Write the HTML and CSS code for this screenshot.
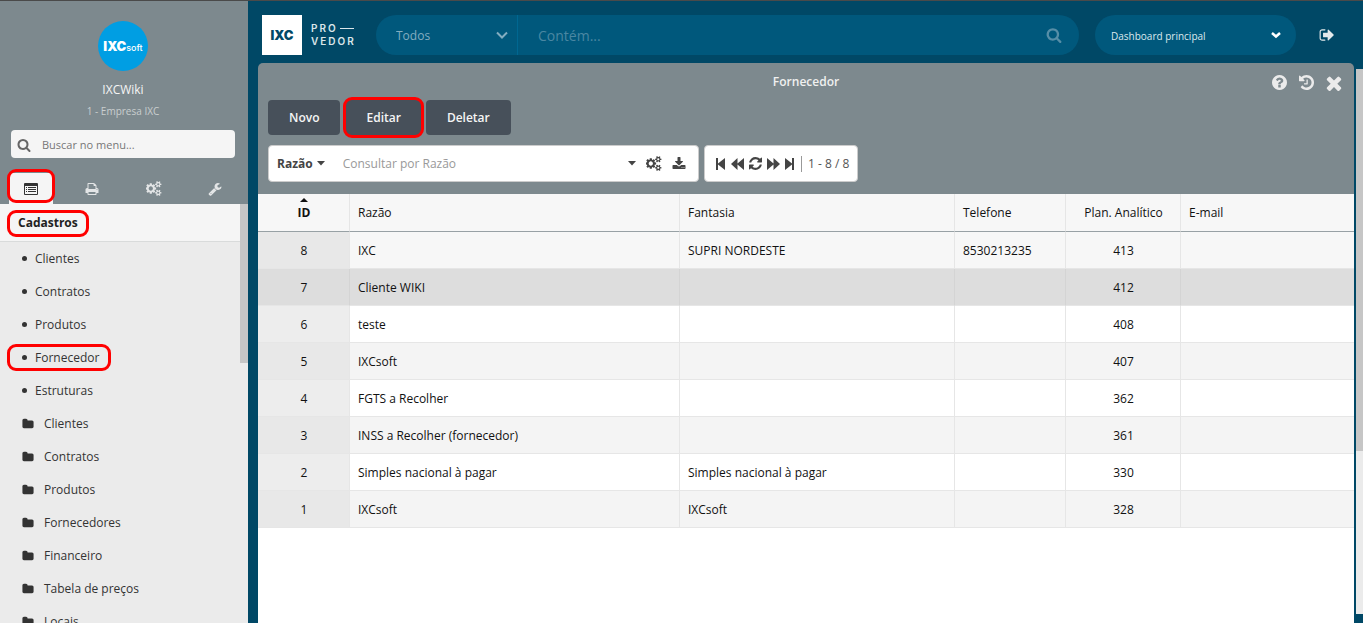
FILE: index.html
```html
<!DOCTYPE html>
<html lang="pt-BR">
<head>
<meta charset="utf-8">
<title>IXC Provedor - Fornecedor</title>
<link rel="stylesheet" href="styles.css">
</head>
<body>
<svg class="sprite" aria-hidden="true">
<symbol id="search" viewBox="0 0 1792 1792"><path d="M1216 832q0-185-131.500-316.500t-316.500-131.500-316.500 131.500-131.500 316.500 131.500 316.500 316.500 131.500 316.500-131.500 131.500-316.500zm512 832q0 52-38 90t-90 38q-54 0-90-38l-343-342q-179 124-399 124-143 0-273.500-55.500t-225-150-150-225-55.500-273.500 55.500-273.500 150-225 225-150 273.500-55.500 273.500 55.500 225 150 150 225 55.500 273.500q0 220-124 399l343 343q37 37 37 90z"/></symbol>
<symbol id="times" viewBox="240 240 1312 1312"><path d="M1490 1322q0 40-28 68l-136 136q-28 28-68 28t-68-28l-294-294-294 294q-28 28-68 28t-68-28l-136-136q-28-28-28-68t28-68l294-294-294-294q-28-28-28-68t28-68l136-136q28-28 68-28t68 28l294 294 294-294q28-28 68-28t68 28l136 136q28 28 28 68t-28 68l-294 294 294 294q28 28 28 68z"/></symbol>
<symbol id="folder" viewBox="0 0 1792 1792"><path d="M1728 608v704q0 92-66 158t-158 66h-1216q-92 0-158-66t-66-158v-960q0-92 66-158t158-66h320q92 0 158 66t66 158v32h672q92 0 158 66t66 158z"/></symbol>
<symbol id="print" viewBox="0 0 1792 1792"><path d="M448 1536h896v-256h-896v256zm0-640h896v-384h-160q-40 0-68-28t-28-68v-160h-640v640zm1152 64q0-26-19-45t-45-19-45 19-19 45 19 45 45 19 45-19 19-45zm128 0v416q0 13-9.500 22.500t-22.500 9.500h-224v160q0 40-28 68t-68 28h-960q-40 0-68-28t-28-68v-160h-224q-13 0-22.500-9.500t-9.500-22.500v-416q0-79 56.500-135.500t135.500-56.500h64v-544q0-40 28-68t68-28h672q40 0 88 20t76 48l152 152q28 28 48 76t20 88v256h64q79 0 135.500 56.500t56.500 135.500z"/></symbol>
<symbol id="cogs" viewBox="0 0 1920 1792"><path d="M832 896q0-106-75-181t-181-75-181 75-75 181 75 181 181 75 181-75 75-181zm768 512q0-52-38-90t-90-38-90 38-38 90q0 53 37.500 90.500t90.500 37.500 90.500-37.500 37.500-90.500zm0-1024q0-52-38-90t-90-38-90 38-38 90q0 53 37.500 90.500t90.500 37.500 90.500-37.500 37.500-90.500zm-384 421v185q0 10-7 19.500t-16 10.500l-155 24q-11 35-32 76 34 48 90 115 7 11 7 20 0 12-7 19-23 30-82.500 89.500t-78.500 59.500q-11 0-21-7l-115-90q-37 19-77 31-11 108-23 155-7 24-30 24h-186q-11 0-20-7.500t-10-17.500l-23-153q-34-10-75-31l-118 89q-7 7-20 7-11 0-21-8-144-133-144-160 0-9 7-19 10-14 41-53t47-61q-23-44-35-82l-152-24q-10-1-17-9.500t-7-19.500v-185q0-10 7-19.500t16-10.500l155-24q11-35 32-76-34-48-90-115-7-11-7-20 0-12 7-20 22-30 82-89t79-59q11 0 21 7l115 90q34-18 77-32 11-108 23-154 7-24 30-24h186q11 0 20 7.500t10 17.500l23 153q34 10 75 31l118-89q8-7 20-7 11 0 21 8 144 133 144 160 0 8-7 19-12 16-42 54t-45 60q23 48 34 82l152 23q10 2 17 10.500t7 19.500zm640 533v140q0 16-149 31-12 27-30 52 51 113 51 138 0 4-4 7-122 71-124 71-8 0-46-47t-52-68q-20 2-30 2t-30-2q-14 21-52 68t-46 47q-2 0-124-71-4-3-4-7 0-25 51-138-18-25-30-52-149-15-149-31v-140q0-16 149-31 13-29 30-52-51-113-51-138 0-4 4-7 4-2 35-20t59-34 30-16q8 0 46 46.500t52 67.500q20-2 30-2t30 2q51-71 92-112l6-2q4 0 124 70 4 3 4 7 0 25-51 138 17 23 30 52 149 15 149 31zm0-1024v140q0 16-149 31-12 27-30 52 51 113 51 138 0 4-4 7-122 71-124 71-8 0-46-47t-52-68q-20 2-30 2t-30-2q-14 21-52 68t-46 47q-2 0-124-71-4-3-4-7 0-25 51-138-18-25-30-52-149-15-149-31v-140q0-16 149-31 13-29 30-52-51-113-51-138 0-4 4-7 4-2 35-20t59-34 30-16q8 0 46 46.500t52 67.500q20-2 30-2t30 2q51-71 92-112l6-2q4 0 124 70 4 3 4 7 0 25-51 138 17 23 30 52 149 15 149 31z"/></symbol>
<symbol id="wrench" viewBox="0 0 1792 1792"><path d="M448 1472q0-26-19-45t-45-19-45 19-19 45 19 45 45 19 45-19 19-45zm644-420l-682 682q-37 37-90 37-52 0-91-37l-106-108q-38-36-38-90 0-53 38-91l681-681q39 98 114.500 173.500t173.500 114.500zm634-435q0 39-23 106-47 134-164.500 217.500t-258.500 83.500q-185 0-316.500-131.500t-131.500-316.500 131.500-316.500 316.500-131.500q58 0 121.500 16.500t107.500 46.500q16 11 16 28t-16 28l-293 169v224l193 107q5-3 79-48.500t135.500-81 70.500-35.500q15 0 23.500 10t8.500 25z"/></symbol>
<symbol id="download" viewBox="0 0 1792 1792"><path d="M1344 1344q0-26-19-45t-45-19-45 19-19 45 19 45 45 19 45-19 19-45zm256 0q0-26-19-45t-45-19-45 19-19 45 19 45 45 19 45-19 19-45zm128-224v320q0 40-28 68t-68 28h-1472q-40 0-68-28t-28-68v-320q0-40 28-68t68-28h465l135 136q58 56 136 56t136-56l136-136h464q40 0 68 28t28 68zm-325-569q17 41-14 70l-448 448q-18 19-45 19t-45-19l-448-448q-31-29-14-70 17-39 59-39h256v-448q0-26 19-45t45-19h256q26 0 45 19t19 45v448h256q42 0 59 39z"/></symbol>
<symbol id="refresh" viewBox="128 128 1536 1536"><path d="M1639 1056q0 5-1 7-64 268-268 434.500t-478 166.500q-146 0-282.500-55t-243.500-157l-129 129q-19 19-45 19t-45-19-19-45v-448q0-26 19-45t45-19h448q26 0 45 19t19 45-19 45l-137 137q71 66 161 102t187 36q134 0 250-65t186-179q11-17 53-117 8-23 30-23h192q13 0 22.500 9.500t9.500 22.500zm25-800v448q0 26-19 45t-45 19h-448q-26 0-45-19t-19-45 19-45l138-138q-148-137-349-137-134 0-250 65t-186 179q-11 17-53 117-8 23-30 23h-199q-13 0-22.500-9.500t-9.500-22.500v-7q65-268 270-434.500t480-166.500q146 0 284 55.500t245 156.500l130-129q19-19 45-19t45 19 19 45z"/></symbol>
<symbol id="help" viewBox="128 128 1536 1536"><path d="M1024 1376v-192q0-14-9-23t-23-9h-192q-14 0-23 9t-9 23v192q0 14 9 23t23 9h192q14 0 23-9t9-23zm256-672q0-88-55.500-163t-138.500-116-170-41q-243 0-371 213-15 24 8 42l132 100q7 6 19 6 16 0 25-12 53-68 86-92 34-24 86-24 48 0 85.500 26t37.500 59q0 38-20 61t-68 45q-63 28-115.500 86.500t-52.500 125.500v36q0 14 9 23t23 9h192q14 0 23-9t9-23q0-19 21.500-49.500t54.500-49.500q32-18 49-28.500t46-35 44.500-48 28-60.500 12.500-81zm384 192q0 209-103 385.500t-279.500 279.500-385.500 103-385.500-103-279.500-279.500-103-385.500 103-385.500 279.500-279.500 385.500-103 385.500 103 279.500 279.500 103 385.500z"/></symbol>
<symbol id="history" viewBox="128 128 1536 1536"><path d="M1664 896q0 156-61 298t-164 245-245 164-298 61q-172 0-327-72.500t-264-204.500q-7-10-6.500-22.500t8.500-20.500l137-138q10-9 25-9 16 2 23 12 73 95 179 147t225 52q104 0 198.500-40.500t163.500-109.500 109.500-163.500 40.500-198.500-40.500-198.500-109.500-163.500-163.500-109.500-198.500-40.500q-98 0-188 35.500t-160 101.500l137 138q31 30 14 69-17 40-59 40h-448q-26 0-45-19t-19-45v-448q0-42 40-59 39-17 69 14l130 129q107-101 244.500-156.500t284.500-55.500q156 0 298 61t245 164 164 245 61 298zm-640-288v448q0 14-9 23t-23 9h-320q-14 0-23-9t-9-23v-64q0-14 9-23t23-9h224v-352q0-14 9-23t23-9h64q14 0 23 9t9 23z"/></symbol>
<symbol id="logout" viewBox="0 128 1664 1536"><path d="M704 1440q0 4 1 20t.5 26.500-3 23.500-10 19.500-20.500 6.500h-320q-119 0-203.500-84.500t-84.500-203.500v-704q0-119 84.500-203.500t203.500-84.500h320q13 0 22.500 9.500t9.500 22.500q0 4 1 20t.5 26.500-3 23.500-10 19.500-20.500 6.500h-320q-66 0-113 47t-47 113v704q0 66 47 113t113 47h312l11.500 1 11.500 3 8 5.500 7 9 2 13.500zm928-544q0 26-19 45l-544 544q-19 19-45 19t-45-19-19-45v-288h-448q-26 0-45-19t-19-45v-384q0-26 19-45t45-19h448v-288q0-26 19-45t45-19 45 19l544 544q19 19 19 45z"/></symbol>
<symbol id="list" viewBox="0 0 14 12"><path fill-rule="evenodd" d="M1 0h12q1 0 1 1v10q0 1-1 1H1q-1 0-1-1V1q0-1 1-1zM1 3v8h12V3zM2 4h1v1H2zM4 4h8v1H4zM2 6h1v1H2zM4 6h8v1H4zM2 8h1v1H2zM4 8h8v1H4z"/></symbol>
<symbol id="first" viewBox="0 0 10 12"><path d="M0 0h2v5.500L9 0v12L2 6.500V12H0z"/></symbol>
<symbol id="last" viewBox="0 0 10 12"><path d="M9 0H7v5.500L0 0v12l7-5.500V12h2z"/></symbol>
<symbol id="prev" viewBox="0 0 13 12"><path d="M6.500 0v5.500L13 0v12L6.500 6.500V12L0 6z"/></symbol>
<symbol id="next" viewBox="0 0 13 12"><path d="M6.500 0v5.500L0 0v12l6.500-5.500V12L13 6z"/></symbol>
<symbol id="caret" viewBox="0 0 8 5"><path d="M0 0h8L4 4.500z"/></symbol>
<symbol id="chevron" viewBox="0 0 12 8"><path d="M1 1.500l5 5 5-5" fill="none" stroke="currentColor" stroke-width="2"/></symbol>
<symbol id="chevron-bold" viewBox="0 0 10 8"><path d="M1 2l4 3.500L9 2" fill="none" stroke="currentColor" stroke-width="2.500"/></symbol>
</svg>

<div class="app">
  <aside class="sidebar">
    <div class="profile">
      <div class="avatar"><span class="avatar-ixc">IXC</span><span class="avatar-soft">soft</span></div>
      <div class="user">IXCWiki</div>
      <div class="company">1 - Empresa IXC</div>
    </div>
    <label class="menu-search">
      <svg class="i14"><use href="#search"/></svg>
      <input type="text" placeholder="Buscar no menu..." aria-label="Buscar no menu">
    </label>
    <nav class="tabs" aria-label="Seções">
      <button class="tab active" aria-label="Cadastros"><svg class="i-list"><use href="#list"/></svg><span class="mark mark-tab"></span></button>
      <button class="tab" aria-label="Relatórios"><svg class="i14"><use href="#print"/></svg></button>
      <button class="tab" aria-label="Configurações"><svg class="i-cogs"><use href="#cogs"/></svg></button>
      <button class="tab" aria-label="Ferramentas"><svg class="i14"><use href="#wrench"/></svg></button>
    </nav>
    <div class="menu">
      <div class="menu-main">
        <h2 class="menu-title">Cadastros<span class="mark mark-title"></span></h2>
        <ul class="menu-list">
          <li><a href="#"><i class="dot"></i>Clientes</a></li>
          <li><a href="#"><i class="dot"></i>Contratos</a></li>
          <li><a href="#"><i class="dot"></i>Produtos</a></li>
          <li><a href="#"><i class="dot"></i>Fornecedor<span class="mark mark-item"></span></a></li>
          <li><a href="#"><i class="dot"></i>Estruturas</a></li>
          <li><a href="#"><svg class="i-folder"><use href="#folder"/></svg>Clientes</a></li>
          <li><a href="#"><svg class="i-folder"><use href="#folder"/></svg>Contratos</a></li>
          <li><a href="#"><svg class="i-folder"><use href="#folder"/></svg>Produtos</a></li>
          <li><a href="#"><svg class="i-folder"><use href="#folder"/></svg>Fornecedores</a></li>
          <li><a href="#"><svg class="i-folder"><use href="#folder"/></svg>Financeiro</a></li>
          <li><a href="#"><svg class="i-folder"><use href="#folder"/></svg>Tabela de preços</a></li>
          <li><a href="#"><svg class="i-folder"><use href="#folder"/></svg>Locais</a></li>
        </ul>
      </div>
      <div class="menu-scroll"><div class="menu-thumb"></div></div>
    </div>
  </aside>

  <main class="main">
    <header class="topbar">
      <div class="brand">
        <div class="brand-box">IXC</div>
        <div class="brand-name"><span>PRO<i class="dash"></i></span><span>VEDOR</span></div>
      </div>
      <div class="global-search">
        <div class="pick pick-scope">
          <select aria-label="Filtro"><option>Todos</option></select>
          <svg class="i-chevron"><use href="#chevron"/></svg>
        </div>
        <input type="text" placeholder="Contém..." aria-label="Pesquisar">
        <button class="plain" aria-label="Pesquisar"><svg class="i16"><use href="#search"/></svg></button>
      </div>
      <div class="pick pick-dash">
        <select aria-label="Dashboard"><option>Dashboard principal</option></select>
        <svg class="i-chevron-bold"><use href="#chevron-bold"/></svg>
      </div>
      <button class="plain logout" aria-label="Sair"><svg class="i-logout"><use href="#logout"/></svg></button>
    </header>

    <div class="workspace">
      <section class="panel">
        <div class="panel-title">
          <h1>Fornecedor</h1>
          <div class="panel-tools">
            <button class="plain" aria-label="Ajuda"><svg class="i15"><use href="#help"/></svg></button>
            <button class="plain" aria-label="Histórico"><svg class="i15"><use href="#history"/></svg></button>
            <button class="plain" aria-label="Fechar"><svg class="i16"><use href="#times"/></svg></button>
          </div>
        </div>
        <div class="actions">
          <button class="btn">Novo</button>
          <button class="btn btn-edit">Editar<span class="mark mark-btn"></span></button>
          <button class="btn">Deletar</button>
        </div>
        <div class="filters">
          <div class="query">
            <button class="plain field">Razão <svg class="i-caret"><use href="#caret"/></svg></button>
            <input type="text" placeholder="Consultar por Razão" aria-label="Consultar por Razão">
            <button class="plain" aria-label="Opções"><svg class="i-caret"><use href="#caret"/></svg></button>
            <button class="plain" aria-label="Configurar"><svg class="i-cogs"><use href="#cogs"/></svg></button>
            <button class="plain" aria-label="Exportar"><svg class="i14"><use href="#download"/></svg></button>
          </div>
          <div class="pager">
            <button class="plain" aria-label="Primeira"><svg class="i-step"><use href="#first"/></svg></button>
            <button class="plain" aria-label="Anterior"><svg class="i-skip"><use href="#prev"/></svg></button>
            <button class="plain" aria-label="Atualizar"><svg class="i12"><use href="#refresh"/></svg></button>
            <button class="plain" aria-label="Próxima"><svg class="i-skip"><use href="#next"/></svg></button>
            <button class="plain" aria-label="Última"><svg class="i-step"><use href="#last"/></svg></button>
            <span class="count">1 - 8 / 8</span>
          </div>
        </div>
        <div class="grid">
          <table>
            <colgroup><col class="c-id"><col class="c-razao"><col class="c-fantasia"><col class="c-tel"><col class="c-plan"><col></colgroup>
            <thead><tr><th class="sorted"><svg class="sort" viewBox="0 0 8 4"><path d="M4 0l4 4H0z"/></svg>ID</th><th>Razão</th><th>Fantasia</th><th>Telefone</th><th class="num">Plan. Analítico</th><th>E-mail</th></tr></thead>
            <tbody>
              <tr class="hover"><td>8</td><td>IXC</td><td>SUPRI NORDESTE</td><td>8530213235</td><td class="num">413</td><td></td></tr>
              <tr class="selected"><td>7</td><td>Cliente WIKI</td><td></td><td></td><td class="num">412</td><td></td></tr>
              <tr><td>6</td><td>teste</td><td></td><td></td><td class="num">408</td><td></td></tr>
              <tr class="alt"><td>5</td><td>IXCsoft</td><td></td><td></td><td class="num">407</td><td></td></tr>
              <tr><td>4</td><td>FGTS a Recolher</td><td></td><td></td><td class="num">362</td><td></td></tr>
              <tr class="alt"><td>3</td><td>INSS a Recolher (fornecedor)</td><td></td><td></td><td class="num">361</td><td></td></tr>
              <tr><td>2</td><td>Simples nacional à pagar</td><td>Simples nacional à pagar</td><td></td><td class="num">330</td><td></td></tr>
              <tr class="alt"><td>1</td><td>IXCsoft</td><td>IXCsoft</td><td></td><td class="num">328</td><td></td></tr>
            </tbody>
          </table>
        </div>
      </section>
      <div class="page-scroll"><div class="page-thumb"></div></div>
    </div>
  </main>
</div>
</body>
</html>
```

FILE: styles.css
```css
* { box-sizing: border-box; }
body {
  margin: 0;
  font: 12px/16px "Open Sans", "Noto Sans", sans-serif;
  color: #111;
  background: #004866;
  overflow: hidden;
}
svg { display: block; flex: none; fill: currentColor; }
button, input, select { font: inherit; color: inherit; margin: 0; border: 0; outline: 0; background: none; }
input { flex: 1; min-width: 0; padding: 0; }
select { appearance: none; width: 100%; }
.sprite { display: none; }
.plain { padding: 0; display: flex; align-items: center; justify-content: center; }

.i12 { width: 12px; height: 12px; }
.i14 { width: 14px; height: 14px; }
.i15 { width: 15px; height: 15px; }
.i16 { width: 16px; height: 16px; }
.i-list { width: 14px; height: 12px; }
.i-cogs { width: 16px; height: 15px; }
.i-folder { width: 12px; height: 12px; }
.i-chevron { width: 12px; height: 8px; }
.i-chevron-bold { width: 10px; height: 8px; }
.i-logout { width: 15px; height: 14px; }
.i-caret { width: 8px; height: 5px; }
.i-step { width: 10px; height: 12px; }
.i-skip { width: 13px; height: 12px; }

.app { display: flex; height: 100vh; border-top: 1px solid #4a4a4a; }

/* Highlight rings drawn over controls */
.mark { position: absolute; border: 3px solid #f00; border-radius: 9px; pointer-events: none; }
.mark-tab { inset: -4px 7px 1px 7px; }
.mark-title { inset: 6px auto 4px 7px; width: 82px; }
.mark-item { inset: 3px auto 3px 7px; width: 104px; }
.mark-btn { inset: -3px -2px; }

/* Sidebar */
.sidebar { width: 248px; flex: none; display: flex; flex-direction: column; background: #7d898e; }
.profile { display: flex; flex-direction: column; align-items: center; padding: 20px 2px 0 0; height: 129px; }
.avatar {
  width: 50px; height: 50px; border-radius: 50%;
  background: #009ee3; color: #fff;
  display: flex; align-items: baseline; justify-content: center;
  font-family: Inter, sans-serif; line-height: 50px;
}
.avatar-ixc { font-size: 13px; font-weight: 900; }
.avatar-soft { font-size: 9px; font-weight: 500; }
.user { margin-top: 11px; color: #f5f5f5; }
.company { margin-top: 5px; font-size: 10px; color: #c9cecf; }
.menu-search {
  display: flex; align-items: center; gap: 11px;
  height: 28px; margin: 0 13px 0 11px; padding: 1px 7px 0 6px;
  border-radius: 4px; background: #f5f5f5; color: #666; font-size: 11px;
}
.menu-search input::placeholder { color: #777; opacity: 1; }
.tabs { display: flex; padding: 15px 2px 0 0; }
.tab {
  flex: 1; height: 31px; padding: 0; position: relative;
  display: flex; align-items: center; justify-content: center; color: #e3e5e6;
}
.tab.active { color: #333; background: linear-gradient(#f5f5f5, #f5f5f5) 9px 0 / 44px 31px no-repeat; }
.menu { flex: 1; min-height: 0; display: flex; overflow: hidden; background: #ebebeb; color: #333; }
.menu-main { flex: 1; }
.menu-title {
  position: relative; margin: 0; padding: 11px 18px 10px; height: 38px;
  font-size: 12px; line-height: 16px; color: #222;
  background: #f5f5f5; border-bottom: 1px solid #d9dbdb;
}
.menu-list { list-style: none; margin: 0; padding: 0; }
.menu-list a {
  position: relative; display: flex; align-items: center; gap: 10px;
  height: 33px; padding-left: 22px; color: inherit; text-decoration: none;
}
.dot { width: 5px; height: 5px; margin-right: -2px; border-radius: 50%; background: #333; }
.menu-scroll { width: 8px; background: #ebebeb; }
.menu-thumb { height: 38%; background: #c6c6c6; }

/* Top bar */
.main { flex: 1; min-width: 0; display: flex; flex-direction: column; padding-left: 10px; }
.topbar { display: flex; align-items: center; height: 62px; padding: 14px 29px 8px 4px; }
.brand { display: flex; align-items: center; gap: 9px; width: 114px; color: #fff; font-family: Inter, sans-serif; }
.brand-box {
  width: 40px; height: 40px; line-height: 40px; text-align: center;
  background: #fff; color: #004866; font-weight: 900; font-size: 13px;
}
.brand-name { font-size: 10px; line-height: 13px; font-weight: 600; letter-spacing: 2px; color: #dbe6ea; }
.brand-name span { display: flex; align-items: center; }
.dash { width: 14px; height: 1px; margin-left: 2px; background: #dbe6ea; }
.global-search {
  flex: 1; display: flex; align-items: center; height: 40px; padding-right: 17px;
  border-radius: 20px; background: #00587c; color: #568ea7; font-size: 14px;
}
.global-search input { padding-left: 20px; height: 40px; }
.global-search input::placeholder { color: #4a87a2; opacity: 1; }
.pick { display: grid; grid-template-columns: 1fr; align-items: center; height: 40px; }
.pick > * { grid-area: 1 / 1; }
.pick > svg { justify-self: end; pointer-events: none; }
.pick select { height: 40px; padding: 1px 30px 0 20px; }
.pick-scope { width: 142px; border-right: 1px solid #006791; font-size: 12px; color: #83adc0; }
.pick-scope svg { margin-right: 9px; }
.pick-dash { width: 201px; margin: 0 23px 0 16px; border-radius: 20px; background: #00587c; color: #fff; font-size: 10px; }
.pick-dash select { padding-left: 16px; color: #dce8ed; }
.pick-dash svg { margin-right: 15px; }
.logout { color: #e4eaec; }

/* Panel */
.workspace { flex: 1; min-height: 0; display: flex; gap: 2px; }
.panel { flex: 1; min-width: 0; display: flex; flex-direction: column; background: #7d898e; border-radius: 5px 5px 0 0; }
.panel-title { display: grid; grid-template-columns: 1fr; height: 37px; align-items: center; }
.panel-title > * { grid-area: 1 / 1; }
.panel-title h1 { margin: 0; text-align: center; font-size: 12px; line-height: 16px; font-weight: 600; color: #f0f0f0; }
.panel-tools { justify-self: end; display: flex; align-items: center; gap: 12px; padding: 2px 12px 0 0; color: #ebebeb; }
.actions { display: flex; gap: 4px; padding: 0 10px; }
.btn {
  position: relative; height: 35px; padding: 0 21px; border-radius: 4px;
  background: #47505a; color: #f5f5f5; font-weight: 600;
}
.btn-edit { margin-left: 1px; }
.filters { display: flex; gap: 5px; padding: 10px 10px 12px; color: #444; }
.query, .pager { display: flex; align-items: center; height: 37px; background: #fff; border: 1px solid #ccc; border-radius: 4px; }
.query { width: 431px; gap: 10px; padding: 0 12px 0 8px; }
.field { gap: 4px; margin-right: 8px; font-weight: bold; }
.query input::placeholder { color: #999; opacity: 1; }
.pager { gap: 5px; padding: 0 8px 0 11px; }
.pager .i12 { width: 13px; height: 13px; }
.count { margin-left: 1px; padding-left: 6px; border-left: 1px solid #999; color: #555; }

/* Data grid */
.grid { flex: 1; background: #fff; overflow: hidden; }
table { width: 100%; table-layout: fixed; border-collapse: separate; border-spacing: 0; }
.c-id { width: 92px; }
.c-razao { width: 330px; }
.c-fantasia { width: 275px; }
.c-tel { width: 111px; }
.c-plan { width: 115px; }
th, td { height: 37px; padding: 0 7px 0 8px; text-align: left; border-right: 1px solid #e6e6e6; border-bottom: 1px solid #e6e6e6; }
td { padding-top: 2px; }
th:last-child, td:last-child { border-right: 0; }
th { height: 38px; font-weight: normal; background: #f7f7f7; border-bottom-color: #98a1a5; }
th.sorted { position: relative; font-weight: bold; text-align: center; }
.sort { position: absolute; top: 4px; left: 50%; width: 8px; height: 4px; margin-left: -4px; }
td:first-child { text-align: center; background: #ededed; }
th.num, td.num { text-align: center; }
.hover td { background: #f7f7f7; }
.alt td { background: #f4f4f4; }
.alt td:first-child, .hover td:first-child { background: #e8e8e8; }
.selected td, .selected td:first-child { background: #ddd; border-right-color: #d4d4d4; }
.page-scroll { width: 7px; margin: 6px 0 9px; background: #ebebeb; }
.page-thumb { height: 70%; background: #c6c6c6; }
```
